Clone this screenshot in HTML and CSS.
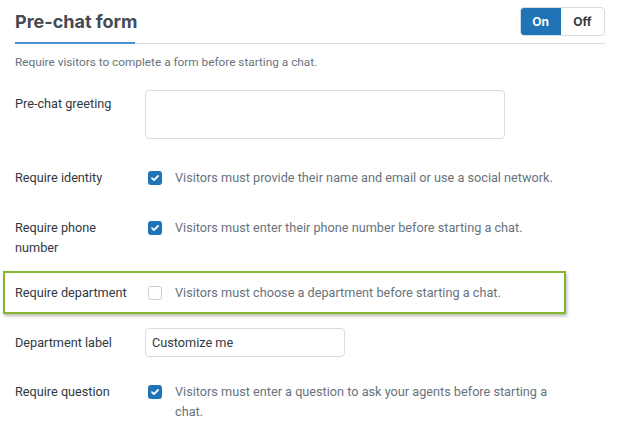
FILE: index.html
```html
<!DOCTYPE html>
<html>
<head>
<meta charset="utf-8">
<link rel="stylesheet" href="styles.css">
</head>
<body>
<div class="page">
  <div class="header">
    <h1 class="title">Pre-chat form</h1>
    <div class="toggle">
      <span class="seg seg-on">On</span>
      <span class="seg seg-off">Off</span>
    </div>
  </div>
  <p class="desc">Require visitors to complete a form before starting a chat.</p>

  <div class="row row-greeting">
    <div class="label label-pad">Pre-chat greeting</div>
    <div class="textarea"></div>
  </div>

  <div class="row row-identity">
    <div class="label">Require identity</div>
    <span class="check on"><svg viewBox="0 0 14 14" width="14" height="14"><path d="M4 7.2 L6 9.1 L10 5" fill="none" stroke="#fff" stroke-width="1.8" stroke-linecap="round" stroke-linejoin="round"/></svg></span>
    <div class="hint">Visitors must provide their name and email or use a social network.</div>
  </div>

  <div class="row row-phone">
    <div class="label">Require phone number</div>
    <span class="check on"><svg viewBox="0 0 14 14" width="14" height="14"><path d="M4 7.2 L6 9.1 L10 5" fill="none" stroke="#fff" stroke-width="1.8" stroke-linecap="round" stroke-linejoin="round"/></svg></span>
    <div class="hint">Visitors must enter their phone number before starting a chat.</div>
  </div>

  <div class="row row-dept">
    <div class="label">Require department</div>
    <span class="check off"></span>
    <div class="hint">Visitors must choose a department before starting a chat.</div>
  </div>

  <div class="row row-deptlabel">
    <div class="label">Department label</div>
    <div class="input">Customize me</div>
  </div>

  <div class="row row-question">
    <div class="label">Require question</div>
    <span class="check on"><svg viewBox="0 0 14 14" width="14" height="14"><path d="M4 7.2 L6 9.1 L10 5" fill="none" stroke="#fff" stroke-width="1.8" stroke-linecap="round" stroke-linejoin="round"/></svg></span>
    <div class="hint">Visitors must enter a question to ask your agents before starting a chat.</div>
  </div>
</div>
</body>
</html>
```
FILE: styles.css
```css
* { box-sizing: border-box; }
html, body { margin: 0; padding: 0; background: #fff; }
body {
  font-family: Roboto, "Noto Sans", "Liberation Sans", sans-serif;
  font-size: 12.7px;
  line-height: 20px;
  color: #2f3941;
}
.page {
  width: 630px;
  padding: 0 25px 0 15px;
}
.header {
  display: flex;
  justify-content: space-between;
  align-items: flex-start;
  border-bottom: 1px solid #d8dcde;
}
.title {
  margin: 11px 0 -1px 0;
  padding-bottom: 9px;
  font-family: Inter, "Noto Sans", sans-serif;
  font-size: 18px;
  line-height: 22px;
  font-weight: 700;
  color: #444b52;
  border-bottom: 2px solid #4a8fcf;
  width: 120px;
  white-space: nowrap;
}
.toggle {
  margin-top: 7px;
  display: flex;
  height: 29px;
  border: 1px solid #d8dcde;
  border-radius: 4px;
  overflow: hidden;
  font-family: Inter, "Noto Sans", sans-serif;
}
.seg {
  display: flex;
  align-items: center;
  justify-content: center;
  font-size: 12px;
  font-weight: 700;
}
.seg-on {
  width: 41px;
  margin: -1px 0 -1px -1px;
  background: #1f73b7;
  color: #fff;
  border-radius: 4px 0 0 4px;
}
.seg-off {
  width: 43px;
  color: #2f3941;
}
.desc {
  margin: 8px 0 0 0;
  font-size: 11.8px;
  color: #68737d;
}
.row {
  display: flex;
  align-items: flex-start;
}
.label {
  width: 130px;
  flex: none;
  padding-right: 10px;
  color: #2f3941;
}
.label-pad { padding-top: 4px; }
.textarea {
  width: 360px;
  height: 49px;
  border: 1px solid #d8dcde;
  border-radius: 4px;
}
.check {
  flex: none;
  width: 14px;
  height: 14px;
  margin: 3px 13px 0 3px;
  border-radius: 3px;
  display: flex;
}
.check.on { background: #1f73b7; }
.check.off { background: #fff; border: 1px solid #c9ced2; }
.hint {
  color: #68737d;
  max-width: 386px;
}
.row-greeting { margin-top: 18px; }
.row-identity { margin-top: 29px; }
.row-phone { margin-top: 30px; }
.row-dept {
  margin: 13px 0 0 -12px;
  width: 563px;
  padding: 10px 0 9px 10px;
  border: 2px solid #86b52e;
  box-shadow: 1px 2px 3px rgba(0,0,0,0.28);
}
.row-deptlabel {
  margin-top: 14px;
  align-items: center;
}
.input {
  width: 200px;
  height: 29px;
  border: 1px solid #d8dcde;
  border-radius: 4px;
  padding: 0 6px;
  display: flex;
  align-items: center;
  color: #2f3941;
  font-size: 12.7px;
}
.row-question { margin-top: 25px; }
```
